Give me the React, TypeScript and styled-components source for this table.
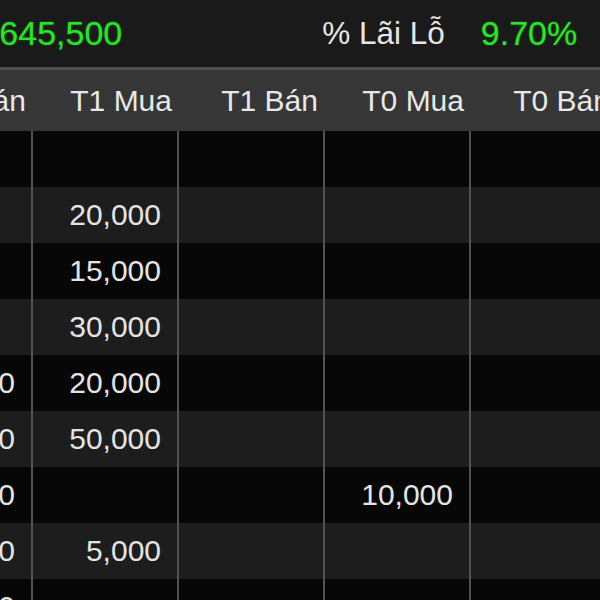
import React from 'react';
import styled, { createGlobalStyle } from 'styled-components';

const GlobalStyle = createGlobalStyle`
  html, body {
    margin: 0;
    padding: 0;
    background: #080808;
    overflow: hidden;
  }
  body {
    font-family: 'Liberation Sans', Arial, sans-serif;
  }
`;

const COL_WIDTH = 146;

const columns = ['T2 Bán', 'T1 Mua', 'T1 Bán', 'T0 Mua', 'T0 Bán', 'T+ Mua'];

// each row: values by column index, '' = empty cell
const rows: string[][] = [
  ['', '', '', '', '', ''],
  ['', '20,000', '', '', '', ''],
  ['', '15,000', '', '', '', ''],
  ['', '30,000', '', '', '', ''],
  ['10,000', '20,000', '', '', '', ''],
  ['20,000', '50,000', '', '', '', ''],
  ['10,000', '', '', '10,000', '', ''],
  ['30,000', '5,000', '', '', '', ''],
  ['10,000', '', '', '', '', ''],
];

const Frame = styled.div`
  width: 600px;
  height: 600px;
  overflow: hidden;
`;

const Board = styled.div`
  margin-left: -113px;
  width: ${COL_WIDTH * columns.length}px;
`;

const TopBar = styled.div`
  display: flex;
  align-items: center;
  height: 67px;
  padding-left: 84px;
  background: #1a1a1a;
  border-bottom: 3px solid #4e4e4e;
`;

const Stat = styled.div<{ $offset?: number }>`
  display: flex;
  align-items: center;
  gap: 36px;
  margin-left: ${(p) => p.$offset ?? 0}px;
`;

const StatLabel = styled.span`
  font-size: 31.5px;
  color: #e6e6e6;
  white-space: nowrap;
`;

const StatValue = styled.span`
  font-size: 34px;
  color: #2fe02f;
  text-shadow: 0 0 2px rgba(20, 160, 20, 0.8);
  white-space: nowrap;
`;

const Grid = styled.div`
  display: grid;
  grid-template-columns: repeat(${columns.length}, ${COL_WIDTH}px);
`;

const HeadCell = styled.div`
  height: 61px;
  display: flex;
  align-items: center;
  justify-content: flex-end;
  padding-right: 7px;
  background: #363636;
  color: #e8e8e8;
  font-size: 30px;
  white-space: nowrap;
  box-sizing: border-box;
`;

const Cell = styled.div<{ $alt: boolean }>`
  height: 56px;
  display: flex;
  align-items: center;
  justify-content: flex-end;
  padding-right: 16px;
  box-sizing: border-box;
  background: ${(p) => (p.$alt ? '#1d1d1d' : '#070707')};
  border-right: 2px solid #525252;
  color: #e4e4e4;
  font-size: 30px;
  white-space: nowrap;
`;

export default function App() {
  return (
    <Frame>
      <GlobalStyle />
      <Board>
        <TopBar>
          <Stat>
            <StatValue>1,645,500</StatValue>
          </Stat>
          <Stat $offset={200}>
            <StatLabel>% Lãi Lỗ</StatLabel>
            <StatValue>9.70%</StatValue>
          </Stat>
        </TopBar>
        <Grid>
          {columns.map((c) => (
            <HeadCell key={c}>{c}</HeadCell>
          ))}
          {rows.map((row, r) =>
            row.map((v, c) => (
              <Cell key={`${r}-${c}`} $alt={r % 2 === 1}>
                {v}
              </Cell>
            )),
          )}
        </Grid>
      </Board>
    </Frame>
  );
}
